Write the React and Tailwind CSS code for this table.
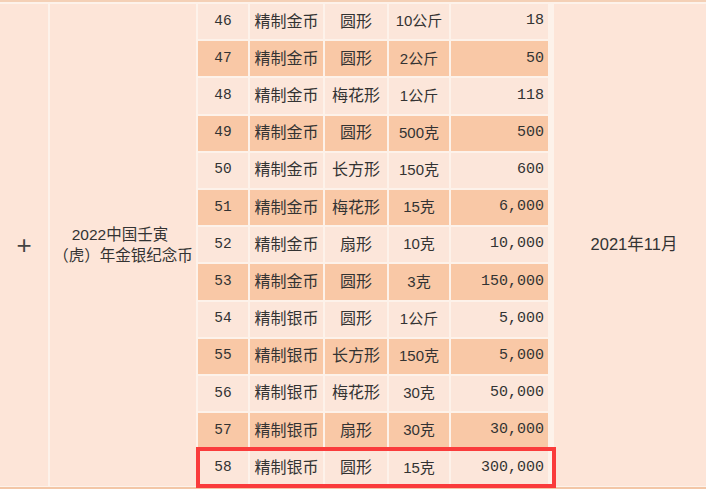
import React from "react";

const rows = [
  ["46", "精制金币", "圆形", "10公斤", "18"],
  ["47", "精制金币", "圆形", "2公斤", "50"],
  ["48", "精制金币", "梅花形", "1公斤", "118"],
  ["49", "精制金币", "圆形", "500克", "500"],
  ["50", "精制金币", "长方形", "150克", "600"],
  ["51", "精制金币", "梅花形", "15克", "6,000"],
  ["52", "精制金币", "扇形", "10克", "10,000"],
  ["53", "精制金币", "圆形", "3克", "150,000"],
  ["54", "精制银币", "圆形", "1公斤", "5,000"],
  ["55", "精制银币", "长方形", "150克", "5,000"],
  ["56", "精制银币", "梅花形", "30克", "50,000"],
  ["57", "精制银币", "扇形", "30克", "30,000"],
  ["58", "精制银币", "圆形", "15克", "300,000"],
];

export default function App() {
  return (
    <div className="relative w-[706px] h-[489px] overflow-hidden bg-[#fdf2ea] text-[#333] font-['Liberation_Sans','Noto_Sans_CJK_SC',sans-serif]">
      <div className="h-[2px] bg-[#f4d0b6]" />
      <div className="mt-[2px] flex gap-[2px] h-[481.6px]">
        <div className="w-[48px] bg-[#fde5d8] flex items-center justify-center">
          <span className="text-[26px] leading-none text-[#444] font-['Liberation_Sans',sans-serif]">+</span>
        </div>
        <div className="w-[146px] bg-[#fde5d8] flex flex-col items-center justify-center text-[15.5px] leading-[21px]">
          <span className="-ml-[6px]">2022中国壬寅</span>
          <span>（虎）年金银纪念币</span>
        </div>
        <div className="w-[354px] grid grid-cols-[50px_73px_62px_60px_97px] auto-rows-[35.2px] gap-[2px]">
          {rows.map((r, i) => {
            const bg = i % 2 === 1 ? "bg-[#f9c8a6]" : "bg-[#fce6da]";
            return (
              <React.Fragment key={r[0]}>
                <div className={`${bg} flex items-center justify-center text-[14.5px] font-['Liberation_Mono',monospace]`}>{r[0]}</div>
                <div className={`${bg} flex items-center justify-center text-[16px]`}>{r[1]}</div>
                <div className={`${bg} flex items-center justify-center text-[16px]`}>{r[2]}</div>
                <div className={`${bg} flex items-center justify-center text-[15px]`}>{r[3]}</div>
                <div className={`${bg} flex items-center justify-end pr-[4px] text-[15px] font-['Liberation_Mono',monospace]`}>{r[4]}</div>
              </React.Fragment>
            );
          })}
        </div>
        <div className="flex-1 bg-[#fde5d8] flex items-center justify-center text-[16.5px]">
          <span className="pl-[8px]">2021年11月</span>
        </div>
      </div>
      <div className="absolute left-0 right-0 bottom-0 h-[2px] bg-[#f3c6a6]" />
      <div className="absolute left-[196px] top-[447px] w-[360px] h-[41px] border-[4px] border-[#fa3b3b]" />
    </div>
  );
}
